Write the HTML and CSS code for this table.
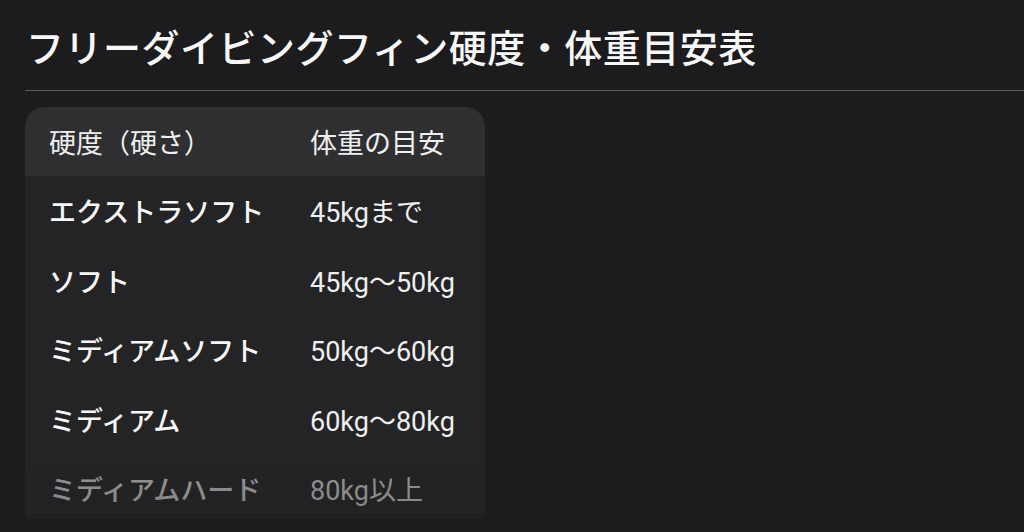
FILE: index.html
```html
<!DOCTYPE html>
<html lang="ja">
<head>
<meta charset="utf-8">
<link rel="stylesheet" href="styles.css">
</head>
<body>
<main class="page">
  <h1 class="title">フリーダイビングフィン硬度・体重目安表</h1>
  <div class="table-wrap">
    <table class="fin-table">
      <thead>
        <tr><th class="c1">硬度（硬さ）</th><th class="c2">体重の目安</th></tr>
      </thead>
      <tbody>
        <tr><td class="c1">エクストラソフト</td><td class="c2">45kgまで</td></tr>
        <tr><td class="c1">ソフト</td><td class="c2">45kg～50kg</td></tr>
        <tr><td class="c1">ミディアムソフト</td><td class="c2">50kg～60kg</td></tr>
        <tr><td class="c1">ミディアム</td><td class="c2">60kg～80kg</td></tr>
        <tr class="faded"><td class="c1">ミディアムハード</td><td class="c2">80kg以上</td></tr>
      </tbody>
    </table>
    <div class="fade"></div>
  </div>
</main>
</body>
</html>
```
FILE: styles.css
```css
html, body {
  margin: 0;
  padding: 0;
  background: #1c1c1e;
  height: 100%;
  overflow: hidden;
}
body {
  font-family: Roboto, "Noto Sans CJK JP", sans-serif;
  color: #f2f2f2;
}
.page {
  padding: 20px 0 0 25px;
}
.title {
  margin: 0;
  font-family: "Noto Sans CJK JP", sans-serif;
  font-size: 38px;
  line-height: 52px;
  font-weight: 500;
  letter-spacing: 0.5px;
  color: #f7f7f7;
  padding: 0 0 18px 1px;
  border-bottom: 1px solid #5c5c5e;
}
.table-wrap {
  position: relative;
  margin-top: 16px;
  width: 460px;
  height: 412px;
  overflow: hidden;
  border-radius: 20px 20px 6px 6px;
  background: #242426;
}
.fin-table {
  border-collapse: collapse;
  width: 460px;
  table-layout: fixed;
}
.fin-table th,
.fin-table td {
  text-align: left;
  font-size: 27px;
  padding: 0;
  white-space: nowrap;
}
.fin-table th {
  background: #2f2f31;
  font-weight: 400;
  height: 69px;
  color: #efefef;
}
.fin-table td {
  height: 69.5px;
}
.fin-table .c1 {
  width: 261px;
  padding-left: 24px;
}
.fin-table td.c1 {
  font-weight: 500;
  color: #f6f6f6;
}
.fin-table td.c2 {
  font-weight: 400;
  color: #efefef;
}
.fin-table tr.faded td {
  color: #a4a4a4;
}
.fade {
  position: absolute;
  left: 0;
  right: 0;
  top: 359px;
  bottom: 0;
  background: linear-gradient(to bottom, rgba(28, 28, 30, 0.12), rgba(28, 28, 30, 0.25));
  border-top: 1px solid rgba(255, 255, 255, 0.02);
}
```
